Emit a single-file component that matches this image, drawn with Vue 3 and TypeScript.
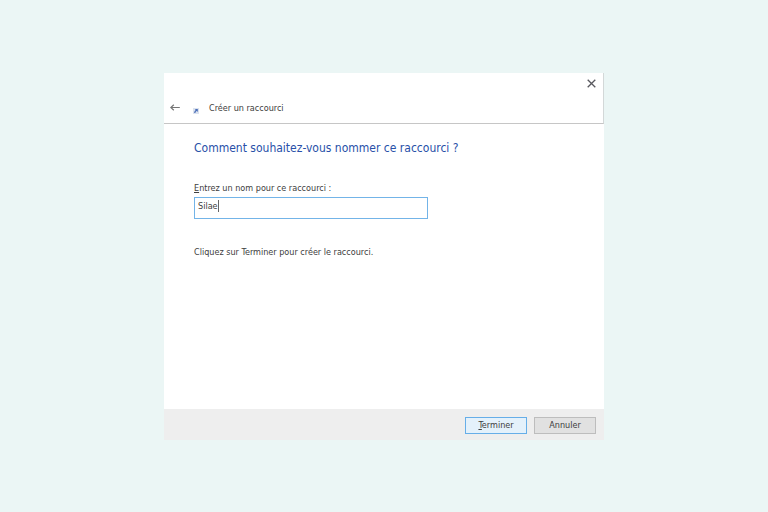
<script setup lang="ts">
import { ref } from 'vue'

const shortcutName = ref<string>('Silae')
</script>

<template>
  <main class="desktop">
    <form class="dialog" @submit.prevent>
      <header class="header">
        <div class="titlebar">
          <button class="icon-button" type="button" aria-label="Fermer">
            <svg width="9" height="9" viewBox="0 0 9 9" aria-hidden="true">
              <path d="M.7.7l7.6 7.6M8.3.7L.7 8.3" fill="none" stroke="#58585e" stroke-width="1.3" />
            </svg>
          </button>
        </div>
        <div class="nav">
          <button class="icon-button" type="button" aria-label="Retour">
            <svg width="10" height="8" viewBox="0 0 10 8" aria-hidden="true">
              <path d="M9.8 3.5H.8M3.8.8L.8 3.5L3.8 6.2" fill="none" stroke="#757575" stroke-width="1.2" />
            </svg>
          </button>
          <svg class="shortcut" width="6" height="6" viewBox="0 0 6 6" aria-hidden="true">
            <rect width="6" height="6" fill="#dbe2ee" />
            <path d="M1.8 1h3v3l-1-1C3 3.4 2.5 4 2.4 5H1.2C1.2 3.7 1.8 2.7 2.8 2z" fill="#4a6eb8" />
          </svg>
          <span class="name">Créer un raccourci</span>
        </div>
      </header>

      <section class="content">
        <h1>Comment souhaitez-vous nommer ce raccourci ?</h1>
        <label for="shortcut-name"><u>E</u>ntrez un nom pour ce raccourci :</label>
        <div class="field">
          <input id="shortcut-name" v-model="shortcutName" type="text" autocomplete="off" spellcheck="false" />
          <span class="caret" aria-hidden="true"></span>
        </div>
        <p>Cliquez sur Terminer pour créer le raccourci.</p>
      </section>

      <footer class="footer">
        <button class="action primary" type="submit"><span><u>T</u>erminer</span></button>
        <button class="action" type="button">Annuler</button>
      </footer>
    </form>
  </main>
</template>

<style>
body {
  margin: 0;
  background: #ebf6f5;
}
</style>

<style scoped>
* {
  box-sizing: border-box;
}

.desktop {
  display: flex;
  justify-content: center;
  align-items: center;
  min-height: 100vh;
  background: #ebf6f5;
  color: #404040;
  font: 9px/12px "DejaVu Sans Condensed", "Noto Sans", sans-serif;
}

.dialog {
  display: flex;
  flex-direction: column;
  width: 100%;
  max-width: 440px;
  background: #fff;
}

.header {
  border-right: 1px solid #d3d8d8;
  border-bottom: 1px solid #c6c6c6;
}

.titlebar {
  display: flex;
  justify-content: flex-end;
  padding: 5px 6px 2px;
}

.nav {
  display: flex;
  align-items: center;
  height: 32px;
  padding: 2px 6px 0 5px;
}

.icon-button {
  display: flex;
  padding: 1px;
  border: 0;
  background: none;
}

.shortcut {
  margin: 6px 10px 0 12px;
}

.content {
  min-height: 285px;
  padding: 16px 30px;
}

h1 {
  margin: 0 0 26px;
  color: #2850a8;
  font-size: 12px;
  font-weight: 400;
  line-height: 16px;
}

label {
  display: block;
  margin-bottom: 3px;
}

u {
  text-underline-offset: 1px;
}

.field {
  position: relative;
  max-width: 234px;
}

input {
  display: block;
  width: 100%;
  height: 22px;
  padding: 0 3px 4px;
  border: 1px solid #73b4e8;
  border-radius: 0;
  outline: 0;
  background: #fff;
  color: inherit;
  font: inherit;
}

.caret {
  position: absolute;
  top: 3px;
  left: 24px;
  width: 1px;
  height: 12px;
  background: #666;
}

p {
  margin: 27px 0 0;
}

.footer {
  display: flex;
  justify-content: flex-end;
  gap: 7px;
  padding: 8px 8px 6px;
  background: #eee;
}

.action {
  width: 62px;
  height: 17px;
  padding: 0;
  border: 1px solid #bdbdbd;
  background: #e1e1e1;
  color: inherit;
  font: inherit;
}

.action.primary {
  border-color: #66aee8;
  background: #e4f1fb;
}
</style>
